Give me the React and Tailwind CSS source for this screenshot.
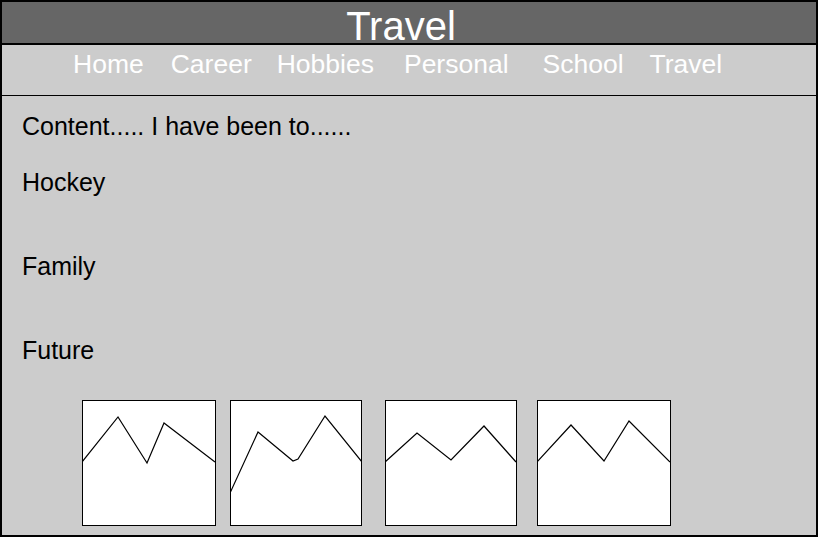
const navLinks = [
  { label: 'Home', gap: 'ml-0' },
  { label: 'Career', gap: 'ml-[27px]' },
  { label: 'Hobbies', gap: 'ml-[25px]' },
  { label: 'Personal', gap: 'ml-[30px]' },
  { label: 'School', gap: 'ml-[34px]' },
  { label: 'Travel', gap: 'ml-[26px]' },
];

// each thumbnail: box width, left margin and the mountain line (box-local coords)
const thumbs = [
  { w: 134, ml: 'ml-0', points: '0,62 36,17 65,63 82,23 133,62' },
  { w: 132, ml: 'ml-[14px]', points: '0,93 28,32 63,61 68,59 95,16 132,62' },
  { w: 132, ml: 'ml-[23px]', points: '0,62 32,33 66,60 99,26 131,62' },
  { w: 134, ml: 'ml-[20px]', points: '0,62 34,25 67,61 92,21 133,62' },
];

const Thumb = ({ w, ml, points }) => (
  <div className={`${ml} h-[126px] border border-black bg-white`} style={{ width: w }}>
    <svg width={w - 2} height={124} viewBox={`1 1 ${w - 2} 124`} className="block">
      <polyline points={points} fill="none" stroke="#000" strokeWidth="1.2" />
    </svg>
  </div>
);

export default function App() {
  return (
    <div
      className="w-[818px] h-[537px] border-2 border-black bg-[#cccccc] flex flex-col overflow-hidden"
      style={{ fontFamily: '"Liberation Sans", Arial, Helvetica, sans-serif' }}
    >
      <header className="h-[43px] shrink-0 bg-[#666666] border-b-2 border-black pt-[4px] pr-4 text-center text-white text-[40px] leading-none">
        Travel
      </header>

      <nav className="h-[51px] shrink-0 border-b border-black flex items-start pt-[6px] pl-[71px] text-white text-[26.5px] leading-none">
        {navLinks.map(link => (
          <a key={link.label} href="#" className={link.gap}>
            {link.label}
          </a>
        ))}
      </nav>

      <main className="flex-1 pt-[16px] pl-[20px] text-black text-[25px] leading-[28px]">
        <p>Content..... I have been to......</p>
        <p className="mt-[28px]">Hockey</p>
        <p className="mt-[56px]">Family</p>
        <p className="mt-[56px]">Future</p>

        <div className="mt-[36px] ml-[60px] flex">
          {thumbs.map((t, i) => (
            <Thumb key={i} {...t} />
          ))}
        </div>
      </main>
    </div>
  );
}
